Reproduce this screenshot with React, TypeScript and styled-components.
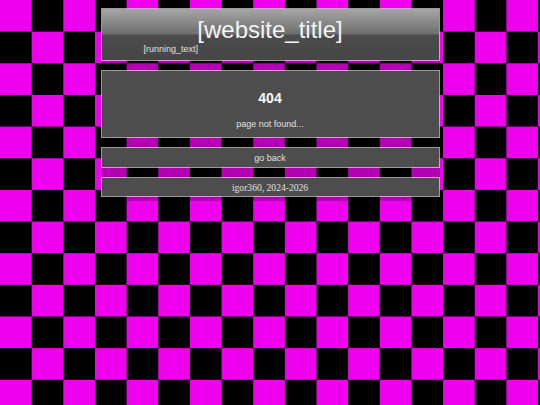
import React from "react";
import styled, { createGlobalStyle } from "styled-components";

const GlobalStyle = createGlobalStyle`
  html {
    min-height: 100%;
    background-color: #000;
    background-image: conic-gradient(#000 0 25%, #ee00ee 0 50%, #000 0 75%, #ee00ee 0);
    background-size: 63.3px 63.3px;
    background-position: 0 0;
  }

  body {
    margin: 8px;
    font-family: "Liberation Sans", Arial, sans-serif;
    color: #e6e6e6;
  }
`;

const Page = styled.main`
  width: 339px;
  margin: 0 auto;
  padding-bottom: 4px;

  display: flex;
  flex-direction: column;
  gap: 9px;

  background-color: rgba(0, 0, 0, 0.25);
`;

const Panel = styled.section<{ $height: number }>`
  box-sizing: border-box;
  height: ${(p) => p.$height}px;

  border: 1px solid rgba(255, 255, 255, 0.6);
  background-color: #4d4d4d;
  background-clip: padding-box;
`;

const Header = styled(Panel)`
  padding-top: 7px;
  background-image: linear-gradient(
    to bottom,
    #a6a6a6 0%,
    #8a8a8a 25%,
    #6e6e6e 49%,
    #4c4c4c 51%,
    #464646 100%
  );
`;

const Title = styled.h1`
  margin: 0;
  font-size: 24px;
  line-height: 28px;
  font-weight: normal;
  text-align: center;
  color: #f4f4f4;
`;

const Running = styled.div`
  padding-left: 42px;
  font-size: 9px;
  line-height: 10px;
  color: #e0e0e0;
  white-space: nowrap;
`;

const Message = styled(Panel)`
  display: flex;
  flex-direction: column;
  align-items: center;
  padding-top: 19px;
`;

const Code = styled.h2`
  margin: 0;
  font-size: 14px;
  line-height: 16px;
  font-weight: bold;
  color: #fafafa;
`;

const Note = styled.p`
  margin: 13px 0 0;
  font-size: 9px;
  line-height: 10px;
  color: #e0e0e0;
`;

const Bar = styled(Panel)<{ $serif?: boolean }>`
  display: flex;
  align-items: center;
  justify-content: center;

  font-family: ${(p) =>
    p.$serif ? '"Liberation Serif", "Times New Roman", serif' : "inherit"};
  font-size: ${(p) => (p.$serif ? "9.6px" : "9px")};
  color: #e0e0e0;
`;

const BackLink = styled.a`
  color: inherit;
  text-decoration: none;
  cursor: pointer;
`;

export default function App() {
  return (
    <>
      <GlobalStyle />
      <Page>
        <Header $height={53}>
          <Title>[website_title]</Title>
          <Running>[running_text]</Running>
        </Header>
        <Message $height={68}>
          <Code>404</Code>
          <Note>page not found...</Note>
        </Message>
        <Bar $height={21}>
          <BackLink href="#">go back</BackLink>
        </Bar>
        <Bar $height={20} $serif>
          igor360, 2024-2026
        </Bar>
      </Page>
    </>
  );
}
